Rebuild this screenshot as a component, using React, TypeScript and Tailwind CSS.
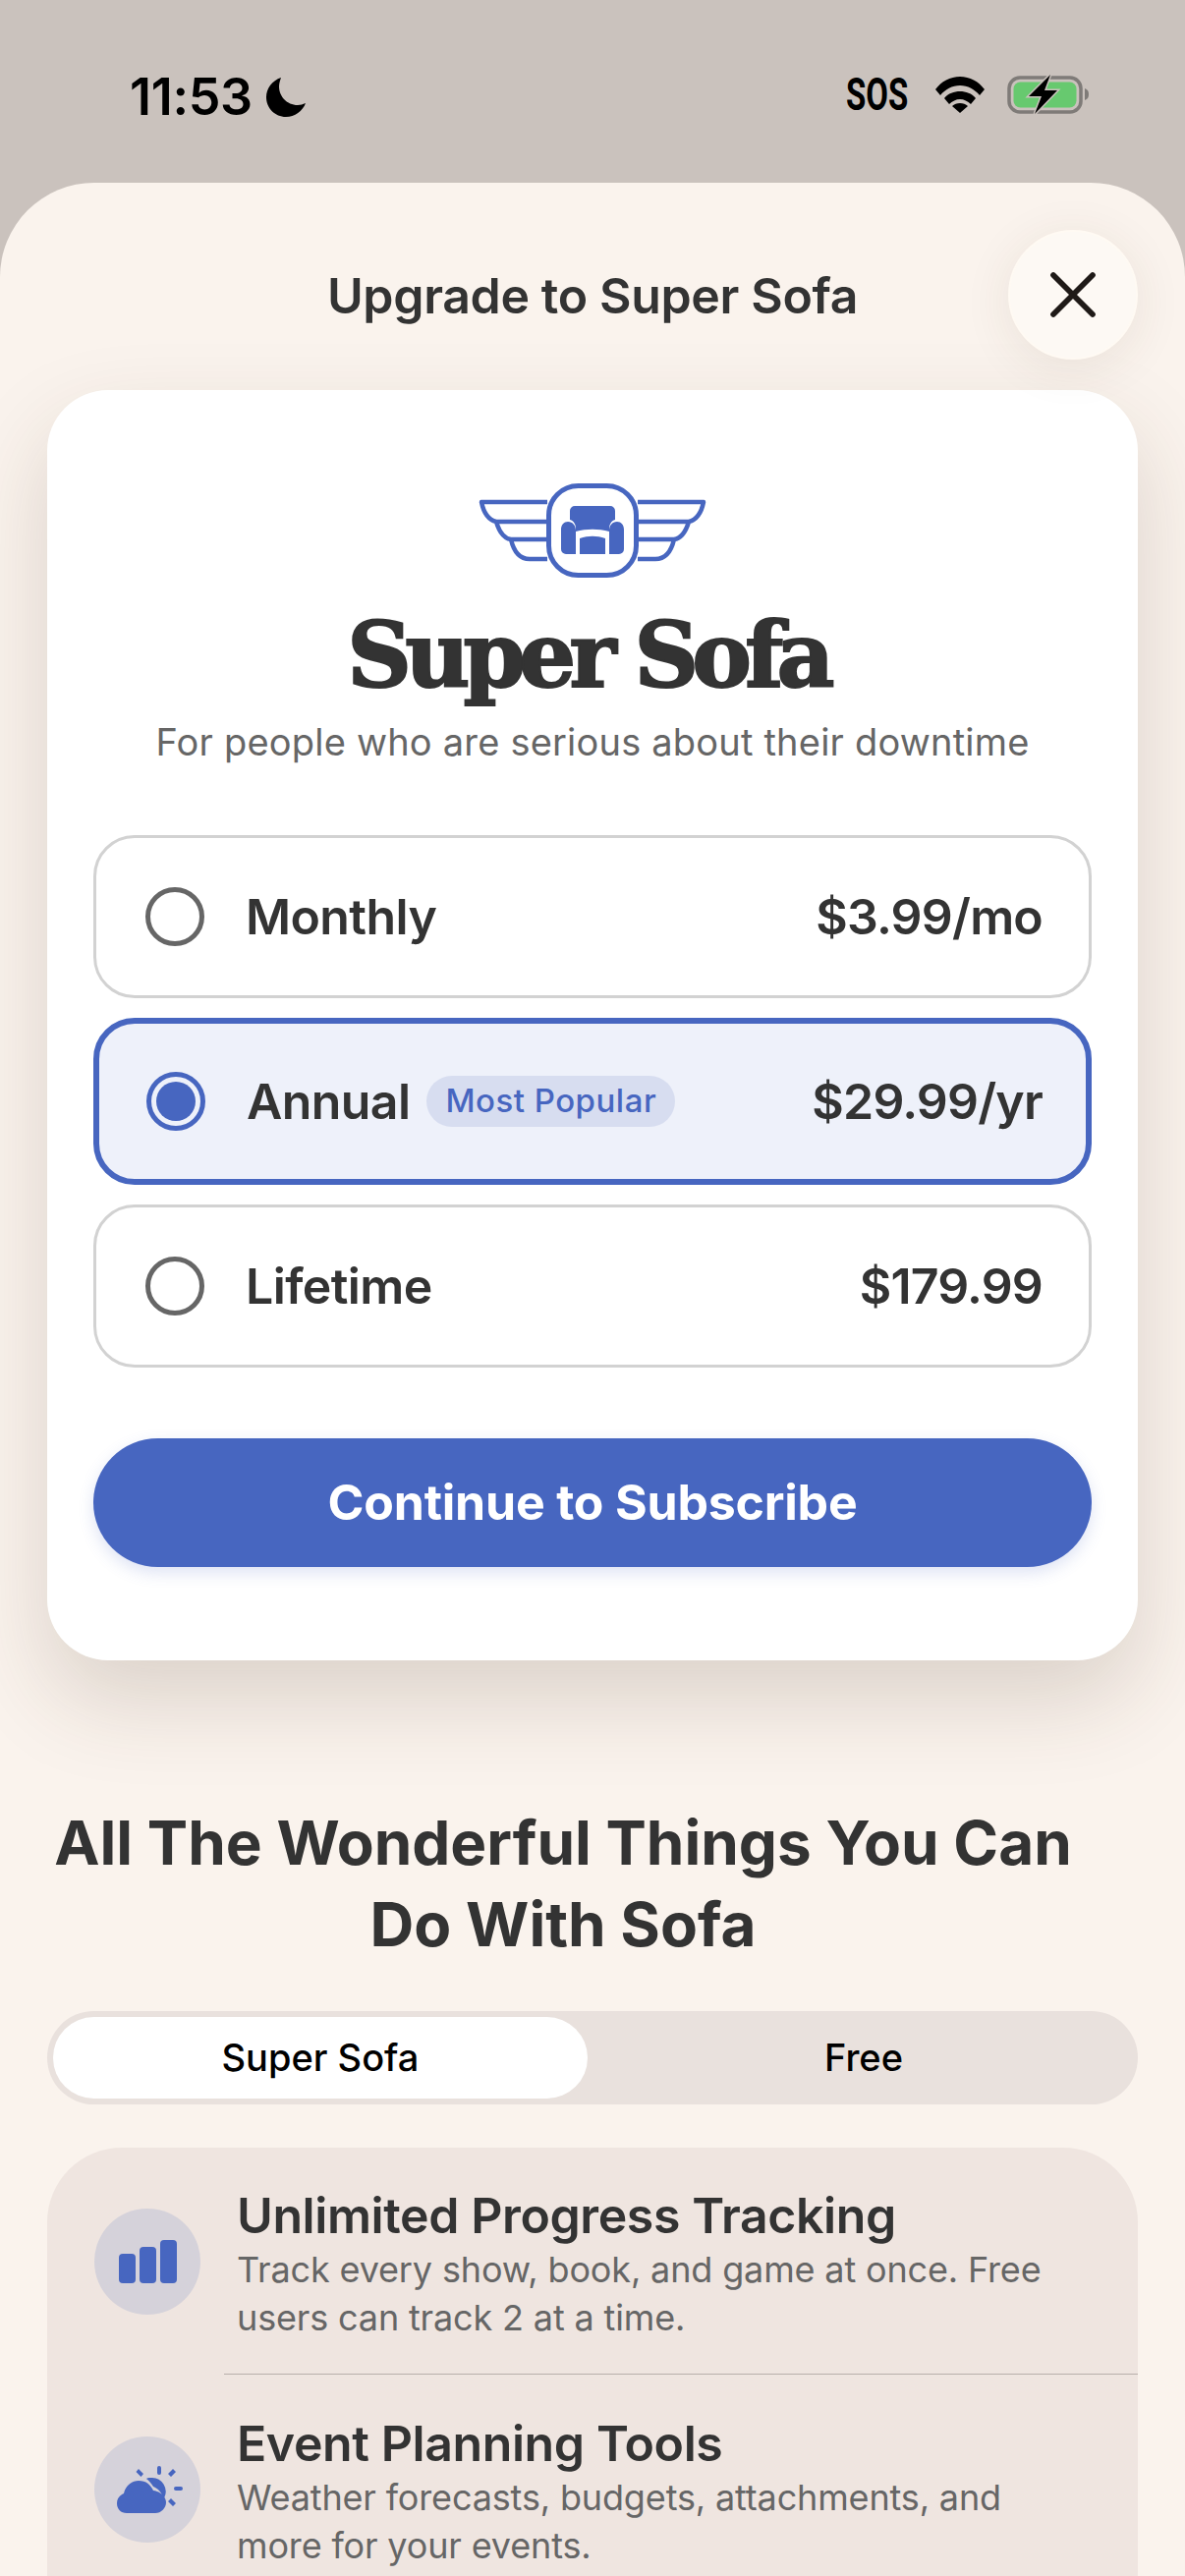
import { X } from "lucide-react";

const inter = "font-['Inter','Noto_Sans',sans-serif]";

function Moon() {
  return (
    <svg width="42" height="42" viewBox="0 0 42 42" className="ml-[13px]">
      <path d="M16 1C7 4 1 12 1 21c0 11 9 20 20 20 9 0 17-6 20-14-3 1-5 2-8 2C22 29 14 20 14 10c0-3 1-6 2-9z" fill="#000" />
    </svg>
  );
}

function Wifi() {
  return (
    <svg width="52" height="38" viewBox="0 0 52 38">
      <path d="M1 14C7 6 16 1 26 1s19 5 25 13l-5 6c-5-6-12-10-20-10S11 14 6 20z" fill="#000" />
      <path d="M10 23c4-5 10-7 16-7s12 2 16 7l-5 6c-3-3-7-5-11-5s-8 2-11 5z" fill="#000" />
      <path d="M18 31c2-2 5-3 8-3s6 1 8 3l-8 7z" fill="#000" />
    </svg>
  );
}

function Battery() {
  return (
    <svg width="84" height="40" viewBox="0 0 84 40">
      <rect x="2" y="3" width="73" height="35" rx="11" fill="none" stroke="#7f7b78" strokeWidth="3.5" />
      <rect x="6.5" y="7.5" width="64" height="26" rx="7" fill="#67c96f" />
      <path d="M79 14c3 1 4 3 4 6s-1 5-4 6z" fill="#7f7b78" />
      <path d="M44 0 22 22h13l-7 18 23-24H38z" fill="#000" stroke="#cac2bd" strokeWidth="3" paintOrder="stroke" />
    </svg>
  );
}

function Logo() {
  const wing = "M70 19H3c2 10 7 18 15 20H70M18 39c3 10 8 17 15 18H70M33 57c3 13 9 20 19 20H70";
  return (
    <svg width="232" height="96" viewBox="0 0 232 96" fill="none" className="block">
      <path d={wing} stroke="#4766c0" strokeWidth="4.5" strokeLinejoin="round" />
      <path d={wing} stroke="#4766c0" strokeWidth="4.5" strokeLinejoin="round" transform="matrix(-1 0 0 1 232 0)" />
      <rect x="71.5" y="2.5" width="89" height="91" rx="30" fill="#fff" stroke="#4766c0" strokeWidth="5" />
      <path d="M98 23h36a5 5 0 0 1 5 5v9c-4 1-6 5-6 9v3c-11-3-23-3-34 0v-3c0-4-2-8-6-9v-9a5 5 0 0 1 5-5z" fill="#4766c0" />
      <path d="M91 39c5 0 8 4 8 9v24H89a5 5 0 0 1-5-5V47c0-5 3-8 7-8zM141 39c-5 0-8 4-8 9v24h10a5 5 0 0 0 5-5V47c0-5-3-8-7-8z" fill="#4766c0" />
      <path d="M103 56c9-3 17-3 26 0v16h-26z" fill="#4766c0" />
    </svg>
  );
}

function Radio({ on }: { on?: boolean }) {
  return on ? (
    <span className="flex size-[60px] shrink-0 items-center justify-center rounded-full border-[5px] border-[#4766c0]">
      <span className="size-[40px] rounded-full bg-[#4766c0]" />
    </span>
  ) : (
    <span className="size-[60px] shrink-0 rounded-full border-[5px] border-[#666666]" />
  );
}

function PlanRow({ name, price, on, badge }: { name: string; price: string; on?: boolean; badge?: string }) {
  return (
    <div
      className={
        on
          ? "flex h-[170px] items-center rounded-[42px] border-[6px] border-[#4766c0] bg-[#eef1fa] pl-[48px] pr-[44px]"
          : "flex h-[166px] items-center rounded-[42px] border-[3px] border-[#d2d2d2] bg-white pl-[50px] pr-[47px]"
      }
    >
      <Radio on={on} />
      <span className="ml-[42px] text-[50px] font-semibold leading-none tracking-[-0.6px] text-[#333333]">{name}</span>
      {badge && (
        <span className="ml-[17px] flex h-[52px] items-center rounded-full bg-[#d7ddf0] px-[19px] text-[33px] font-medium tracking-[0.5px] text-[#4766c0]">
          {badge}
        </span>
      )}
      <span className="ml-auto text-[50px] font-semibold leading-none tracking-[-0.8px] text-[#333333]">{price}</span>
    </div>
  );
}

function BarsIcon() {
  return (
    <svg width="59" height="44" viewBox="0 0 59 44" fill="#4766c0">
      <rect x="0" y="14" width="17" height="30" rx="4" />
      <rect x="21" y="7" width="17" height="37" rx="4" />
      <rect x="42" y="0" width="17" height="44" rx="4" />
    </svg>
  );
}

function WeatherIcon() {
  return (
    <svg width="68" height="48" viewBox="0 0 68 48" fill="#4766c0" className="ml-[6px]">
      <path d="M34 12a14 14 0 0 1 13 22c-1-7-5-11-10-13-2-3-4-6-7-8 1-1 2-1 4-1z" />
      <rect x="41" y="0" width="4" height="9" rx="2" />
      <rect x="58" y="21" width="9" height="4" rx="2" />
      <path d="M27 8l-5-5-2.500 3 5 5zM55 11l5-5-3-3-5 5zM52 36l5 5 3-3-5-5z" />
      <path d="M10 48C4 48 0 44 0 38c0-5 3-8 7-10 2-9 9-13 15-13 8 0 12 4 15 10 8 1 13 7 13 12 0 6-5 11-11 11z" />
    </svg>
  );
}

function Feature({ icon, title, lines }: { icon: React.ReactNode; title: string; lines: string[] }) {
  return (
    <div className="flex items-center pl-[48px]">
      <span className="mb-[4px] flex size-[108px] shrink-0 items-center justify-center rounded-full bg-[#d5d2da]">{icon}</span>
      <div className="ml-[37px]">
        <div className="text-[50px] font-semibold leading-[62px] tracking-[-0.4px] text-[#333333]">{title}</div>
        <div className="text-[36px] leading-[49px] tracking-[-0.15px] text-[#666666]">
          {lines.map((l) => (
            <div key={l}>{l}</div>
          ))}
        </div>
      </div>
    </div>
  );
}

export default function App() {
  return (
    <div className={`h-[2622px] w-[1206px] overflow-hidden bg-[#cac2bd] ${inter}`}>
      {/* status bar */}
      <div className="flex h-[186px] items-start justify-between pl-[132px] pr-[97px] pt-[76px]">
        <div className="flex items-center">
          <span className="text-[52px] font-semibold leading-[46px] tracking-[-0.3px] text-black">11:53</span>
          <Moon />
        </div>
        <div className="flex items-center">
          <span className="mr-[27px] origin-right scale-x-[0.7] font-['Roboto',sans-serif] text-[47px] font-bold leading-[40px] text-black">
            SOS
          </span>
          <Wifi />
          <span className="ml-[22px]">
            <Battery />
          </span>
        </div>
      </div>

      {/* sheet */}
      <div className="h-[2436px] rounded-t-[96px] bg-[#faf3ed]">
        <div className="relative flex h-[211px] items-center justify-center pt-[18px]">
          <span className="text-[50px] font-semibold leading-none tracking-[-0.35px] text-[#333333]">Upgrade to Super Sofa</span>
          <button className="absolute right-[48px] top-[48px] flex size-[132px] items-center justify-center rounded-full border-2 border-[#fffaf3] bg-[#fdf9f4] shadow-[0_8px_50px_rgba(80,50,30,0.09)]">
            <X size={80} strokeWidth={1.7} color="#1f1a17" />
          </button>
        </div>

        <div className="mx-[48px] flex h-[1293px] flex-col rounded-[62px] bg-white px-[47px] pt-[95px] shadow-[0_40px_90px_rgba(70,50,30,0.17)]">
          <div className="flex justify-center">
            <Logo />
          </div>
          <div className="mt-[24px] pr-[10px] text-center font-['DejaVu_Serif',serif] text-[91px] font-bold leading-[110px] tracking-[-6.8px] text-[#333333] [-webkit-text-stroke:2px_#333333]">
            Super Sofa
          </div>
          <div className="mt-[9px] text-center text-[38px] leading-[48px] tracking-[0.2px] text-[#666666]">
            For people who are serious about their downtime
          </div>
          <div className="mt-[71px] flex flex-col gap-[20px]">
            <PlanRow name="Monthly" price="$3.99/mo" />
            <PlanRow name="Annual" price="$29.99/yr" badge="Most Popular" on />
            <PlanRow name="Lifetime" price="$179.99" />
          </div>
          <button className="mt-[72px] flex h-[131px] items-center justify-center rounded-[66px] bg-[#4766c0] text-[50px] font-bold tracking-[-0.2px] text-white shadow-[0_6px_16px_rgba(71,102,192,0.18)]">
            Continue to Subscribe
          </button>
        </div>

        <h2 className="mt-[144px] pl-[48px] pr-[108px] text-center text-[62px] font-bold leading-[83px] text-[#333333]">
          All The Wonderful Things You Can Do With Sofa
        </h2>

        <div className="mx-[48px] mt-[47px] flex h-[95px] rounded-full bg-[#e9e1dd] p-[6px]">
          <div className="flex w-[544px] items-center justify-center rounded-full bg-white text-[38px] font-medium text-black">
            Super Sofa
          </div>
          <div className="flex flex-1 items-center justify-center pl-[8px] text-[38px] font-medium text-black">Free</div>
        </div>

        <div className="ml-[48px] mt-[44px] h-[600px] w-[1110px] rounded-[76px] bg-[#efe5e0] pt-[38px]">
          <Feature
            icon={<BarsIcon />}
            title="Unlimited Progress Tracking"
            lines={["Track every show, book, and game at once. Free", "users can track 2 at a time."]}
          />
          <div className="ml-[180px] mt-[32px] h-[1px] bg-[#b8afab]" />
          <div className="mt-[39px]">
            <Feature
              icon={<WeatherIcon />}
              title="Event Planning Tools"
              lines={["Weather forecasts, budgets, attachments, and", "more for your events."]}
            />
          </div>
        </div>
      </div>
    </div>
  );
}
